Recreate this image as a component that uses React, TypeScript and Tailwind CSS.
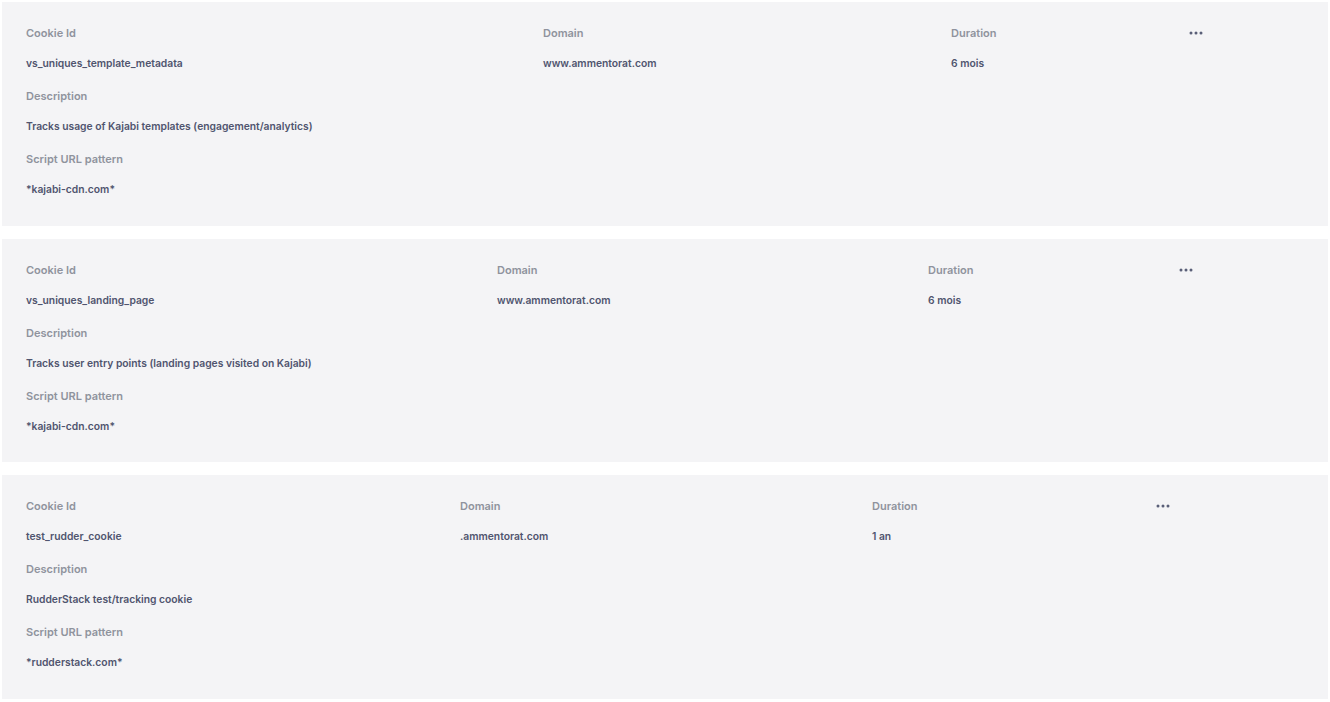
import React from "react";

type Cookie = {
  id: string;
  domain: string;
  duration: string;
  description: string;
  pattern: string;
  cols: string;
};

const cookies: Cookie[] = [
  {
    id: "vs_uniques_template_metadata",
    domain: "www.ammentorat.com",
    duration: "6 mois",
    description: "Tracks usage of Kajabi templates (engagement/analytics)",
    pattern: "*kajabi-cdn.com*",
    cols: "grid-cols-[517px_408px_238px_1fr]",
  },
  {
    id: "vs_uniques_landing_page",
    domain: "www.ammentorat.com",
    duration: "6 mois",
    description: "Tracks user entry points (landing pages visited on Kajabi)",
    pattern: "*kajabi-cdn.com*",
    cols: "grid-cols-[471px_431px_251px_1fr]",
  },
  {
    id: "test_rudder_cookie",
    domain: ".ammentorat.com",
    duration: "1 an",
    description: "RudderStack test/tracking cookie",
    pattern: "*rudderstack.com*",
    cols: "grid-cols-[434px_412px_284px_1fr]",
  },
];

function Dots() {
  return (
    <svg width="14" height="4" viewBox="0 0 14 4" className="mt-[6px]">
      <circle cx="2" cy="2" r="1.5" fill="#5a5f78" />
      <circle cx="7" cy="2" r="1.5" fill="#5a5f78" />
      <circle cx="12" cy="2" r="1.5" fill="#5a5f78" />
    </svg>
  );
}

const label = "text-[11px] leading-4 font-semibold text-[#8f939d]";
const value = "text-[10.3px] leading-4 font-semibold text-[#50556f]";

function Card({ c }: { c: Cookie }) {
  return (
    <div className="bg-[#f4f4f6] pl-6 pr-6 pt-[23px] pb-[28.5px]">
      <div className={`grid ${c.cols} gap-y-[14px]`}>
        <div className={label}>Cookie Id</div>
        <div className={label}>Domain</div>
        <div className={label}>Duration</div>
        <div className="flex">
          <Dots />
        </div>
        <div className={value}>{c.id}</div>
        <div className={value}>{c.domain}</div>
        <div className={value}>{c.duration}</div>
        <div />
      </div>
      <div className="mt-[17px] flex flex-col gap-[14px]">
        <div className={label}>Description</div>
        <div className={value}>{c.description}</div>
      </div>
      <div className="mt-[17px] flex flex-col gap-[14px]">
        <div className={label}>Script URL pattern</div>
        <div className={value}>{c.pattern}</div>
      </div>
    </div>
  );
}

export default function App() {
  return (
    <div
      className="w-[1330px] h-[702px] bg-white p-[2px] flex flex-col gap-[13px]"
      style={{ fontFamily: "Inter, 'Noto Sans', sans-serif" }}
    >
      {cookies.map((c) => (
        <Card key={c.id} c={c} />
      ))}
    </div>
  );
}
